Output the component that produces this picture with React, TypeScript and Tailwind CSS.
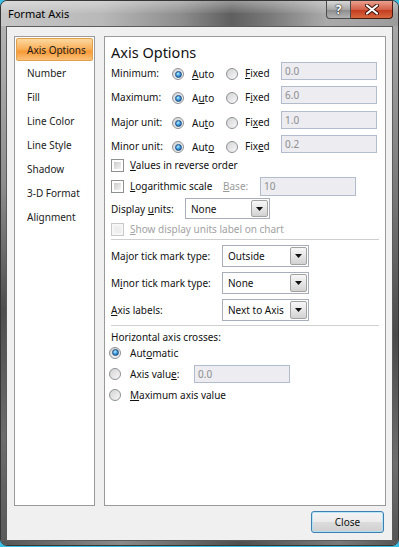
import type { ReactNode } from "react";

const NAV_ITEMS = [
  "Axis Options",
  "Number",
  "Fill",
  "Line Color",
  "Line Style",
  "Shadow",
  "3-D Format",
  "Alignment",
];

const U = ({ children }: { children: ReactNode }) => (
  <span className="underline decoration-[1px] underline-offset-[1px]">{children}</span>
);

function Radio({ checked, className = "" }: { checked?: boolean; className?: string }) {
  return (
    <span
      className={`flex h-[12px] w-[12px] shrink-0 items-center justify-center rounded-full border border-[#8d9095] bg-[linear-gradient(135deg,#d2d2d2,#f9f9f9)] ${className}`}
    >
      {checked && (
        <span className="h-[7px] w-[7px] rounded-full border border-[#1d4f86] bg-[radial-gradient(circle_at_40%_35%,#c6f0ff_0%,#3d9ee0_45%,#12508f_100%)]" />
      )}
    </span>
  );
}

function Checkbox({ disabled }: { disabled?: boolean }) {
  return (
    <span
      className={`flex h-[13px] w-[13px] shrink-0 p-[2px] border ${
        disabled ? "border-[#c9c9c9] bg-[#f6f6f6]" : "border-[#8e8f8f] bg-white"
      }`}
    >
      <span
        className={`block h-full w-full ${
          disabled
            ? "bg-[#eeeeee]"
            : "bg-[linear-gradient(135deg,#cbcbcb,#f3f3f3)]"
        }`}
      />
    </span>
  );
}

function TextBox({ value, className = "" }: { value: string; className?: string }) {
  return (
    <div
      className={`flex h-[18px] items-center border border-[#b3bccd] bg-[#ececf1] pl-[3px] text-[#8e8e8e] ${className}`}
    >
      {value}
    </div>
  );
}

function Select({ value, className = "" }: { value: string; className?: string }) {
  return (
    <div className={`flex items-stretch border border-[#a9afb8] bg-white ${className}`}>
      <span className="flex flex-1 items-center overflow-hidden whitespace-nowrap pl-[5px]">
        {value}
      </span>
      <span className="m-px flex w-[17px] items-center justify-center rounded-[2px] border border-[#a2a2a2] bg-[linear-gradient(180deg,#f7f7f7,#e6e6e6_50%,#d2d2d2)]">
        <svg width="7" height="4" viewBox="0 0 7 4">
          <path d="M0 0h7L3.5 4z" fill="#111" />
        </svg>
      </span>
    </div>
  );
}

function UnitRow({
  label,
  auto,
  fixed,
  value,
  className = "",
}: {
  label: string;
  auto: ReactNode;
  fixed: ReactNode;
  value: string;
  className?: string;
}) {
  return (
    <div className={`flex items-start ${className}`}>
      <span className="mt-[5px] w-[61px] leading-[14px]">{label}</span>
      <Radio checked className="mt-[7px]" />
      <span className="ml-[8px] mt-[6px] w-[34px] leading-[14px]">{auto}</span>
      <Radio className="mt-[7px]" />
      <span className="ml-[7px] mt-[5px] w-[36px] leading-[14px]">{fixed}</span>
      <TextBox value={value} className="mt-[1px] w-[96px]" />
    </div>
  );
}

export default function App() {
  return (
    <div className="h-[547px] w-[399px] bg-[#3cc0e6] font-['Noto_Sans',sans-serif] text-[10px] leading-[14px] text-[#111]">
      <div className="flex h-[546px] w-[399px] flex-col overflow-hidden rounded-[7px] border border-[#363636] bg-[#8e8e8e]">
        {/* title bar */}
        <div className="relative flex h-[25px] shrink-0 items-start justify-between bg-[linear-gradient(90deg,#c6c6c6_0%,#b9b9b9_25%,#8e8e8e_45%,#5f5f5f_58%,#7a7a7a_68%,#aaaaaa_82%,#9c9c9c_100%)] pl-[7px] pr-[5px]">
          <span className="pointer-events-none absolute inset-x-0 top-0 h-[12px] bg-[linear-gradient(180deg,rgba(255,255,255,0.35),rgba(255,255,255,0.05))]" />
          <span className="relative self-center text-[11px] leading-[14px] text-black">Format Axis</span>
          <div className="relative flex">
            <div className="flex h-[18px] w-[25px] items-center justify-center rounded-bl-[4px] border border-t-0 border-[#4a4a4a] bg-[linear-gradient(180deg,#d8d8d8,#a8a8a8_50%,#8a8a8a_51%,#b4b4b4)] text-[12px] font-bold leading-none text-white [text-shadow:0_0_2px_#222,0_0_1px_#000]">
              ?
            </div>
            <div className="flex h-[18px] w-[42px] items-center justify-center rounded-br-[4px] border border-l-0 border-t-0 border-[#4a1a10] bg-[linear-gradient(180deg,#eaa08e,#d4624a_50%,#c23a1f_51%,#d8683e)]">
              <svg width="14" height="11" viewBox="0 0 14 11">
                <path d="M2 1.5l10 8M12 1.5l-10 8" stroke="#3a1208" strokeWidth="4" strokeLinecap="round" />
                <path d="M2 1.5l10 8M12 1.5l-10 8" stroke="#fff" strokeWidth="2.2" strokeLinecap="round" />
              </svg>
            </div>
          </div>
        </div>

        <div className="flex min-h-0 flex-1">
          {/* left frame */}
          <div className="w-[5px] shrink-0 bg-[linear-gradient(180deg,#b4b4b4,#8e8e8e_30%,#4e4e4e_55%,#6c6c6c_80%,#5a5a5a)]" />

          {/* client area */}
          <div className="flex h-[515px] flex-1 flex-col border border-[#5c5c5c] bg-[#f0f0f0] pb-[7px] pl-[7px] pr-[6px] pt-[9px]">
            <div className="flex h-[470px] gap-[9px]">
              {/* category list */}
              <div className="flex w-[81px] shrink-0 flex-col border border-[#9a9a9a] bg-white p-px">
                {NAV_ITEMS.map((item, i) =>
                  i === 0 ? (
                    <div
                      key={item}
                      className="flex h-[23px] items-center rounded-[2px] border border-[#e3a04c] bg-[linear-gradient(180deg,#fcd9a0_0%,#f9b25e_45%,#f79a38_60%,#fbc27a_100%)] pl-[10px] text-[#1a1a1a]"
                    >
                      {item}
                    </div>
                  ) : (
                    <div key={item} className="flex h-[24px] items-center pl-[11px] text-[#222]">
                      {item}
                    </div>
                  )
                )}
              </div>

              {/* options panel */}
              <div className="flex flex-1 flex-col border border-[#9a9a9a] bg-white pl-[6px] pr-[6px]">
                <div className="mt-[5px] h-[19px] text-[14.5px] leading-[20px] text-[#111]">
                  Axis Options
                </div>

                <UnitRow
                  label="Minimum:"
                  auto={<><U>A</U>uto</>}
                  fixed={<><U>F</U>ixed</>}
                  value="0.0"
                  className="h-[24px]"
                />
                <UnitRow
                  label="Maximum:"
                  auto={<>A<U>u</U>to</>}
                  fixed={<>F<U>i</U>xed</>}
                  value="6.0"
                  className="h-[25px]"
                />
                <UnitRow
                  label="Major unit:"
                  auto={<>Au<U>t</U>o</>}
                  fixed={<>Fi<U>x</U>ed</>}
                  value="1.0"
                  className="h-[24px]"
                />
                <UnitRow
                  label="Minor unit:"
                  auto={<>Aut<U>o</U></>}
                  fixed={<>Fix<U>e</U>d</>}
                  value="0.2"
                  className="h-[23px]"
                />

                <div className="flex h-[16px] items-center">
                  <Checkbox />
                  <span className="ml-[6px]">
                    <U>V</U>alues in reverse order
                  </span>
                </div>

                <div className="mt-[1px] flex h-[24px] items-center">
                  <Checkbox />
                  <span className="ml-[6px] w-[93px]">
                    <U>L</U>ogarithmic scale
                  </span>
                  <span className="w-[37px] text-[#9a9a9a]">
                    <U>B</U>ase:
                  </span>
                  <TextBox value="10" className="h-[19px] w-[96px]" />
                </div>

                <div className="flex h-[21px] items-center">
                  <span className="w-[74px]">
                    Display <U>u</U>nits:
                  </span>
                  <Select value="None" className="h-[21px] w-[85px]" />
                </div>

                <div className="flex h-[20px] items-center">
                  <Checkbox disabled />
                  <span className="ml-[6px] text-[#a2a2a2]">
                    <U>S</U>how display units label on chart
                  </span>
                </div>

                <div className="h-px bg-[#cfcfcf]" />

                <div className="mt-[5px] flex h-[22px] items-center">
                  <span className="w-[111px]">Major tick mark type:</span>
                  <Select value="Outside" className="h-[22px] w-[87px]" />
                </div>
                <div className="mt-[5px] flex h-[22px] items-center">
                  <span className="w-[111px]">
                    M<U>i</U>nor tick mark type:
                  </span>
                  <Select value="None" className="h-[22px] w-[87px]" />
                </div>
                <div className="mt-[5px] flex h-[22px] items-center">
                  <span className="w-[111px]">
                    <U>A</U>xis labels:
                  </span>
                  <Select value="Next to Axis" className="h-[22px] w-[87px]" />
                </div>

                <div className="mt-[4px] h-px bg-[#cfcfcf]" />

                <div className="mt-[3px] flex h-[16px] items-center">Horizontal axis crosses:</div>
                <div className="flex h-[15px] items-center">
                  <Radio checked className="-ml-[2px]" />
                  <span className="ml-[9px]">
                    Aut<U>o</U>matic
                  </span>
                </div>
                <div className="mt-[3px] flex h-[22px] items-center">
                  <Radio className="-ml-[2px]" />
                  <span className="ml-[9px] w-[64px]">
                    Axis valu<U>e</U>:
                  </span>
                  <TextBox value="0.0" className="w-[96px]" />
                </div>
                <div className="mt-[2px] flex h-[16px] items-center">
                  <Radio className="-ml-[2px]" />
                  <span className="ml-[9px]">
                    <U>M</U>aximum axis value
                  </span>
                </div>
              </div>
            </div>

            <div className="mt-[5px] flex justify-end pr-[2px]">
              <button className="flex h-[22px] w-[73px] items-center justify-center rounded-[3px] border border-[#3c7fb1] bg-[linear-gradient(180deg,#f4f4f4_0%,#ebebeb_48%,#dcdcdc_52%,#cfcfcf_100%)] text-[10px] text-[#111] shadow-[inset_0_0_0_1px_rgba(170,225,250,0.8)]">
                Close
              </button>
            </div>
          </div>

          {/* right frame */}
          <div className="w-[5px] shrink-0 bg-[linear-gradient(180deg,#a8a8a8,#7c7c7c_30%,#4a4a4a_60%,#6e6e6e_85%,#555555)]" />
        </div>

        {/* bottom frame */}
        <div className="h-[4px] shrink-0 bg-[linear-gradient(90deg,#555555,#8a8a8a_30%,#4e4e4e_60%,#7a7a7a_85%,#555555)]" />
      </div>
    </div>
  );
}
